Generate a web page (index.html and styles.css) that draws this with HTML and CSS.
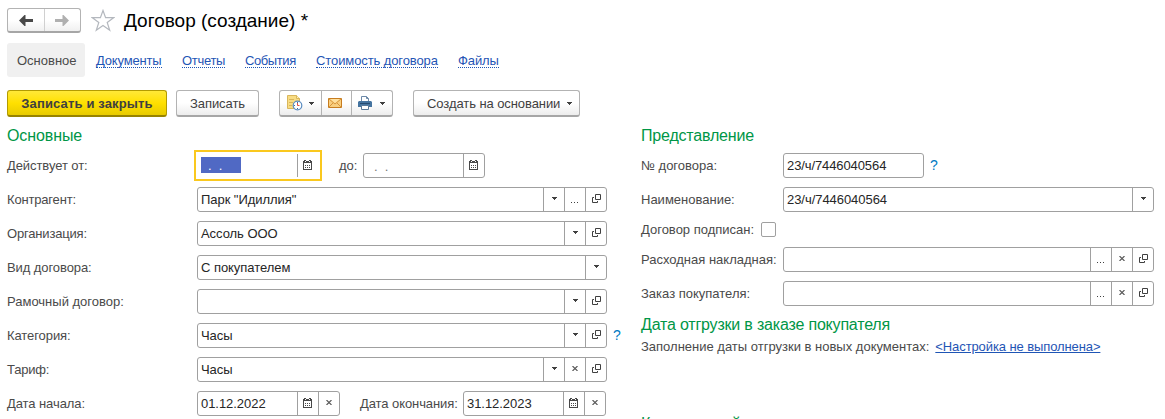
FILE: index.html
```html
<!DOCTYPE html>
<html lang="ru">
<head>
<meta charset="utf-8">
<title>Договор (создание) *</title>
<link rel="stylesheet" href="styles.css">
</head>
<body>
<svg class="defs" width="0" height="0">
  <symbol id="cal" viewBox="0 0 9 10"><path fill="#484848" d="M0 1h9v2H0zM0 3h1v7H0zM8 3h1v7H8zM1 9h7v1H1zM1 0h2v1H1zM6 0h2v1H6zM2 5h1v1H2zM4 5h1v1H4zM6 5h1v1H6zM2 7h1v1H2zM4 7h1v1H4zM6 7h1v1H6z"/><path fill="#fff" d="M2 1h1v1H2zM6 1h1v1H6z"/></symbol>
  <symbol id="open" viewBox="0 0 9 9"><path fill="none" stroke="#404040" d="M3.500.5h5v5h-5zM2 3.500H.5v5h5V7"/></symbol>
  <symbol id="down" viewBox="0 0 5 3"><path fill="#404040" d="M0 0h5v1H4v1H3v1H2V2H1V1H0z"/></symbol>
  <symbol id="x" viewBox="0 0 6 5"><path fill="none" stroke="#555" stroke-width="1.100" d="M.5 0l5 5M5.500 0l-5 5"/></symbol>
  <symbol id="dots" viewBox="0 0 8 1"><path fill="#404040" d="M0 0h1v1H0zM3 0h1v1H3zM6 0h1v1H6z"/></symbol>
</svg>

<header class="title-bar">
  <div class="history">
    <span><svg width="14" height="11" viewBox="0 0 14 11"><path d="M0 5.500L5.500 0h1v4H14v3H6.500v4h-1z" fill="#484848"/></svg></span>
    <span><svg width="14" height="11" viewBox="0 0 14 11"><path d="M14 5.500L8.500 0h-1v4H0v3h7.500v4h1z" fill="#b0b0b0"/></svg></span>
  </div>
  <svg class="star" width="24" height="23" viewBox="0 0 24 23"><path d="M12 1.500l2.600 7.200h8l-6.400 4.800 2.500 7.800-6.700-4.800-6.700 4.800 2.500-7.800L1.400 8.700h8z" fill="#fff" stroke="#b4b8be" stroke-width="1.200"/></svg>
  <h1>Договор (создание) *</h1>
</header>

<nav class="tabs">
  <span class="tab">Основное</span>
  <a class="l1">Документы</a>
  <a class="l2">Отчеты</a>
  <a class="l3">События</a>
  <a class="l4">Стоимость договора</a>
  <a class="l5">Файлы</a>
</nav>

<div class="toolbar">
  <button class="btn primary">Записать и закрыть</button>
  <button class="btn save">Записать</button>
  <div class="btn group">
    <span class="g1"><svg width="16" height="16" viewBox="0 0 16 16"><path d="M.5.5h9l3 3v10H.5z" fill="#f8dc83" stroke="#d9b65c"/><path d="M9.500.5v3h3" fill="#fff0b5" stroke="#d9b65c"/><path d="M2 4.500h5M2 7.500h4M2 10.500h3" stroke="#d9b65c"/><circle cx="10.500" cy="10.500" r="4.300" fill="#fff" stroke="#5b8cc0" stroke-width="1.200"/><path d="M10.500 8v2.500h2" fill="none" stroke="#e0513f"/><path d="M10.500 7v1M10.500 13v1M7 10.500h1" stroke="#376fa9"/></svg><svg width="5" height="3"><use href="#down"/></svg></span>
    <span class="g2"><svg width="14" height="10" viewBox="0 0 14 10"><path d="M.5.500h13v9H.5z" fill="#f9cf80" stroke="#c77d20"/><path d="M2 1h10L7 5z" fill="#ffe1a0"/><path d="M1 1l6 5 6-5M1 9l4-4M13 9L9 5" fill="none" stroke="#d9963c"/></svg></span>
    <span class="g3"><svg width="14" height="14" viewBox="0 0 14 14"><path d="M3.500 6V.5h5l2 2V6" fill="#fff" stroke="#6c89a8"/><path d="M8.500.5v2h2" fill="none" stroke="#6c89a8"/><path d="M1 5h12l1 1v5H0V6z" fill="#4574a0"/><path d="M2 7.500h10" stroke="#254a6f"/><path d="M3.500 9.500h7v4h-7z" fill="#fff" stroke="#597999"/></svg><svg width="5" height="3"><use href="#down"/></svg></span>
  </div>
  <button class="btn create"><span>Создать на основании</span><svg width="5" height="3"><use href="#down"/></svg></button>
</div>

<main class="form">
  <section class="left">
    <h2>Основные</h2>
    <div class="row"><label>Действует от:</label>
      <div class="focus"><div class="field date1"><span class="val"><mark>&nbsp; . &nbsp;. &nbsp; &nbsp;</mark></span><i class="c"><svg width="9" height="10"><use href="#cal"/></svg></i></div></div>
      <label class="to">до:</label>
      <div class="field date1"><span class="val blank">&nbsp; . &nbsp;.</span><i class="c"><svg width="9" height="10"><use href="#cal"/></svg></i></div>
    </div>
    <div class="row"><label class="t2">Контрагент:</label><div class="field wide"><span class="val">Парк "Идиллия"</span><i><svg width="5" height="3"><use href="#down"/></svg></i><i class="low"><svg width="8" height="1"><use href="#dots"/></svg></i><i class="o"><svg width="9" height="9"><use href="#open"/></svg></i></div></div>
    <div class="row"><label class="t2">Организация:</label><div class="field wide"><span class="val">Ассоль ООО</span><i><svg width="5" height="3"><use href="#down"/></svg></i><i class="o"><svg width="9" height="9"><use href="#open"/></svg></i></div></div>
    <div class="row"><label>Вид договора:</label><div class="field wide"><span class="val">С покупателем</span><i><svg width="5" height="3"><use href="#down"/></svg></i></div></div>
    <div class="row"><label class="t0">Рамочный договор:</label><div class="field wide"><span class="val"></span><i><svg width="5" height="3"><use href="#down"/></svg></i><i class="o"><svg width="9" height="9"><use href="#open"/></svg></i></div></div>
    <div class="row"><label>Категория:</label><div class="field wide"><span class="val">Часы</span><i><svg width="5" height="3"><use href="#down"/></svg></i><i class="o"><svg width="9" height="9"><use href="#open"/></svg></i></div><span class="help">?</span></div>
    <div class="row"><label class="t2">Тариф:</label><div class="field wide"><span class="val">Часы</span><i><svg width="5" height="3"><use href="#down"/></svg></i><i><svg width="6" height="5"><use href="#x"/></svg></i><i class="o"><svg width="9" height="9"><use href="#open"/></svg></i></div></div>
    <div class="row"><label>Дата начала:</label><div class="field date2"><span class="val">01.12.2022</span><i class="c"><svg width="9" height="10"><use href="#cal"/></svg></i><i><svg width="6" height="5"><use href="#x"/></svg></i></div>
      <label class="end">Дата окончания:</label><div class="field date2"><span class="val">31.12.2023</span><i class="c"><svg width="9" height="10"><use href="#cal"/></svg></i><i><svg width="6" height="5"><use href="#x"/></svg></i></div></div>
  </section>

  <section class="right">
    <h2 class="view">Представление</h2>
    <div class="row"><label>№ договора:</label><div class="field num"><span class="val">23/ч/7446040564</span></div><span class="help">?</span></div>
    <div class="row"><label>Наименование:</label><div class="field full"><span class="val">23/ч/7446040564</span><i><svg width="5" height="3"><use href="#down"/></svg></i></div></div>
    <div class="row short"><label class="signed">Договор подписан:</label><span class="check"></span></div>
    <div class="row"><label>Расходная накладная:</label><div class="field full"><span class="val"></span><i class="low"><svg width="8" height="1"><use href="#dots"/></svg></i><i><svg width="6" height="5"><use href="#x"/></svg></i><i class="o"><svg width="9" height="9"><use href="#open"/></svg></i></div></div>
    <div class="row"><label>Заказ покупателя:</label><div class="field full"><span class="val"></span><i class="low"><svg width="8" height="1"><use href="#dots"/></svg></i><i><svg width="6" height="5"><use href="#x"/></svg></i><i class="o"><svg width="9" height="9"><use href="#open"/></svg></i></div></div>
    <h2 class="view ship">Дата отгрузки в заказе покупателя</h2>
    <p class="note"><span>Заполнение даты отгрузки в новых документах:</span><a>&lt;Настройка не выполнена&gt;</a></p>
    <h2 class="comment">Комментарий</h2>
  </section>
</main>
</body>
</html>
```
FILE: styles.css
```css
* { box-sizing: border-box; }
body {
  margin: 0; width: 1165px; height: 419px; overflow: hidden; background: #fff;
  font: 13px/16px "Liberation Sans", Arial, sans-serif; color: #4a4a4a;
}
svg { display: block; flex: none; }
.defs { position: absolute; }
.title-bar { display: flex; padding: 8px 0 0 7px; height: 43px; align-items: flex-start; }
.history {
  display: flex; width: 74px; height: 25px; border: 1px solid #b3b3b3; border-bottom: 2px solid #a6a6a6;
  border-radius: 3px; background: linear-gradient(#fff 50%, #f0f0f0);
}
.history span { flex: 1; display: flex; align-items: center; justify-content: center; padding-top: 1px; }
.history span + span { border-left: 1px solid #d0d0d0; }
.star { margin: 1px 0 0 10px; }
h1 { margin: 1px 0 0 9px; font-size: 19px; line-height: 24px; font-weight: 400; color: #000; white-space: nowrap; }
.tabs { display: flex; height: 34px; padding-left: 7px; align-items: center; white-space: nowrap; }
.tab { width: 78px; height: 34px; padding-left: 10px; line-height: 35px; background: #f0f0f0; border-radius: 3px; margin-right: 11px; }
.tabs a { color: #1f55b5; line-height: 13px; height: 14px; margin: 1px 20px 0 0; border-bottom: 1px dotted #1f55b5; }
.tabs .l1 { width: 66px; letter-spacing: -.17px; }
.tabs .l2 { width: 43px; letter-spacing: -.3px; }
.tabs .l3 { width: 51px; letter-spacing: -.4px; }
.tabs .l4 { width: 122px; letter-spacing: -.1px; }
.tabs .l5 { width: 41px; letter-spacing: -.1px; }
.toolbar { display: flex; height: 46px; padding: 13px 0 0 7px; }
.btn {
  height: 27px; padding: 1px 0 0; border: 1px solid #b3b3b3; border-bottom: 2px solid #a6a6a6; border-radius: 3px;
  background: linear-gradient(#fff 50%, #ededed); color: #404040; font: 13px/16px "Liberation Sans", Arial, sans-serif;
  white-space: nowrap;
}
.primary { width: 160px; font-weight: 700; letter-spacing: .15px; border-color: #b39b00 #b39b00 #978300; background: linear-gradient(#ffe838, #ffe000 50%, #e8cb00); }
.save { width: 83px; margin-left: 9px; letter-spacing: -.08px; }
.group { display: flex; width: 114px; margin-left: 20px; padding: 0; }
.group span { display: flex; align-items: center; }
.g1 { width: 41px; padding-left: 7px; gap: 6px; }
.g2 { width: 30px; padding-left: 6px; border-left: 1px solid #b3b3b3; }
.g3 { flex: 1; padding-left: 6px; gap: 8px; border-left: 1px solid #b3b3b3; }
.create { display: flex; align-items: center; gap: 7px; width: 167px; margin-left: 20px; padding-left: 13px; letter-spacing: -.08px; }
.form { display: flex; padding-left: 7px; }
.left { width: 634px; }
.right { width: 513px; }
h2 { margin: 0; height: 25px; font-size: 16px; line-height: 25px; font-weight: 400; color: #009646; white-space: nowrap; letter-spacing: -.1px; }
h2.view { letter-spacing: -.19px; }
.row { display: flex; align-items: center; height: 34px; }
.row label { width: 190px; flex: none; white-space: nowrap; padding-top: 2px; letter-spacing: -.08px; }
.row .t2 { letter-spacing: -.18px; }
.row .t0 { letter-spacing: 0; }
.right .row label { width: 142px; letter-spacing: 0; }
.field { display: flex; height: 25px; flex: none; border: 1px solid #a0a0a0; border-radius: 3px; background: #fff; }
.val { flex: 1; padding-left: 3px; line-height: 24px; color: #262626; white-space: pre; letter-spacing: -.05px; }
.num .val { letter-spacing: -.1px; }
.blank { padding-top: 1px; color: #777; }
.field i { width: 21px; border-left: 1px solid #a0a0a0; display: flex; align-items: center; justify-content: center; padding-bottom: 1px; }
.field i.c { padding: 0 1px 1px 0; }
.field i.low { padding: 7px 0 0; }
.field i.o { padding: 0 0 2px 1px; }
.wide { width: 410px; }
.date1 { width: 122px; }
.date2 { width: 143px; }
.focus { margin: 0 0 0 -3px; padding: 1px; border: 2px solid #fac81e; }
.focus .field { border-color: transparent; }
.focus .field i { border-left-color: #a0a0a0; }
.focus mark { display: block; width: 40px; height: 16px; margin-top: 3px; overflow: hidden; line-height: 18px; background: #5069c4; color: #fff; }
.left .row .to { width: 24px; margin-left: 17px; }
.left .row .end { width: 103px; margin-left: 20px; }
.help { margin-left: 6px; color: #007ac3; font-size: 14px; }
.num { width: 141px; }
.full { width: 371px; }
.short { height: 26px; }
.right .row .signed { width: 120px; }
.check { width: 15px; height: 15px; border: 1px solid #a0a0a0; border-radius: 2px; }
h2.ship { margin-top: 2px; height: 27px; }
.note { display: flex; gap: 6px; margin: 0; height: 16px; line-height: 16px; white-space: nowrap; }
.note a { color: #1f55b5; text-decoration: underline; letter-spacing: -.1px; }
h2.comment { margin-top: 56px; }
```
